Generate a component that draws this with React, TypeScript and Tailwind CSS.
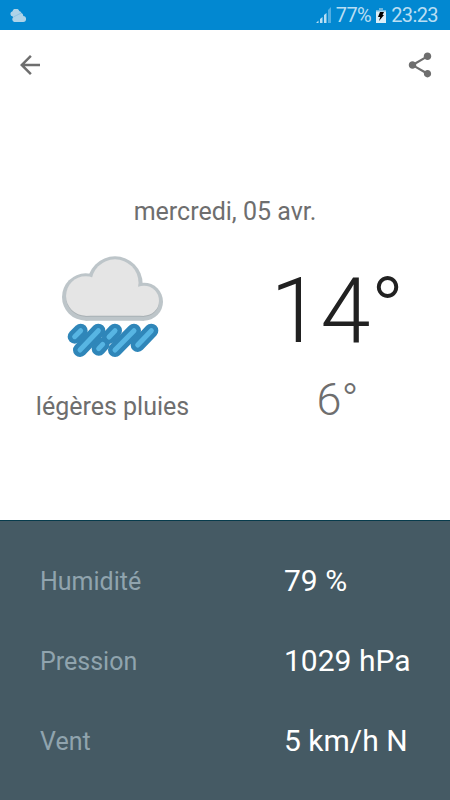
import type { ReactNode } from "react";

const details = [
  { label: "Humidité", value: "79 %" },
  { label: "Pression", value: "1029 hPa" },
  { label: "Vent", value: "5 km/h N" },
];

const drops = [
  "M74 275 92 257",
  "M90 315 145 257",
  "M146 311 158 298",
  "M177 276 195 257",
  "M195 315 252 257",
  "M263 300 304 257",
];

const CloudShape = ({ inset = 0, fill }: { inset?: number; fill: string }) => (
  <g fill={fill}>
    <circle cx="107" cy="156" r={71 - inset} />
    <circle cx="195" cy="117" r={83 - inset} />
    <circle cx="282" cy="170" r={57 - inset} />
    <path d={`M107 140H282V${227 - inset}H107Z`} />
  </g>
);

const RainIcon = () => (
  <svg viewBox="0 0 375 375" className="h-[125px] w-[125px]" fill="none">
    <CloudShape fill="#bdc5c9" />
    <CloudShape inset={12} fill="#a9b0b4" />
    <g transform="translate(0 -3)">
      <CloudShape inset={12} fill="#e5e5e5" />
    </g>
    <g stroke="#2f86b9" strokeWidth="42" strokeLinecap="round">
      {drops.map((d) => (
        <path key={d} d={d} />
      ))}
    </g>
    <g stroke="#57b5e3" strokeWidth="15" strokeLinecap="round">
      {drops.map((d) => (
        <path key={d} d={d} />
      ))}
    </g>
  </svg>
);

const StatusBar = () => (
  <div className="flex h-[30px] items-center bg-[#0288d1] pr-3 pl-2.5 text-[20px] tracking-[-0.6px] text-[#b9def3]">
    <svg viewBox="0 0 16 13" className="h-[13px] w-4" fill="#aed3e8">
      <path d="M2.700 7.500A2.700 2.700 0 0 1 2.500 2.200 3.600 3.600 0 0 1 9.300 2 2.800 2.800 0 0 1 11.500 4L4 9Z" />
      <path d="M4.300 13a2.800 2.800 0 0 1-.8-5L11.500 4A3 3 0 0 1 13.200 7 3 3 0 0 1 13 13Z" />
      <path d="M3.500 7.900 11 4" stroke="#7bbbe0" strokeWidth=".6" />
    </svg>
    <div className="ml-auto flex items-center">
      <svg viewBox="0 0 15 16" className="mr-[5px] h-4 w-[15px]" fill="#b9def3">
        <path d="M0 16l2.500-2.500V16zM4 12l2.500-2v6H4zM8 8l2.500-2v10H8z" />
        <path d="M12 3l3-3v16h-3z" opacity=".45" />
      </svg>
      <span className="leading-none">77%</span>
      <svg viewBox="0 0 10 15" className="mr-[5px] ml-[5px] h-[15px] w-2.5">
        <path d="M3 0h4v2h3v2H0V2h3z" fill="#6fb8df" />
        <path d="M0 3.500h10V15H0z" fill="#dceef8" />
        <path d="M4 4h4L6.500 7H8l-5 6 1.200-4H2z" fill="#000" />
      </svg>
      <span className="leading-none">23:23</span>
    </div>
  </div>
);

const Toolbar = () => (
  <div className="flex h-[70px] items-center justify-between px-[15px] text-[#6e6e6e]">
    <svg viewBox="0 0 24 24" className="h-[30px] w-[30px]" fill="currentColor">
      <path d="M20 11H7.830l5.590-5.590L12 4l-8 8 8 8 1.410-1.410L7.830 13H20v-2z" />
    </svg>
    <svg viewBox="0 0 24 24" className="h-[30px] w-[30px]" fill="currentColor">
      <path d="M18 16.080c-.76 0-1.440.3-1.960.77L8.910 12.700c.05-.23.090-.46.090-.7s-.04-.47-.09-.7l7.050-4.110c.54.5 1.250.81 2.040.81 1.660 0 3-1.340 3-3s-1.340-3-3-3-3 1.340-3 3c0 .24.040.47.090.7L8.040 9.810C7.500 9.310 6.790 9 6 9c-1.660 0-3 1.340-3 3s1.340 3 3 3c.79 0 1.500-.31 2.040-.81l7.120 4.160c-.05.21-.08.43-.08.65 0 1.610 1.310 2.920 2.920 2.920s2.920-1.310 2.920-2.920-1.310-2.920-2.920-2.920z" />
    </svg>
  </div>
);

const Column = ({ children }: { children: ReactNode }) => (
  <div className="flex w-[225px] flex-col items-center">{children}</div>
);

export default function App() {
  return (
    <div className="flex h-[800px] w-[450px] flex-col overflow-hidden bg-white font-['Roboto',sans-serif]">
      <StatusBar />
      <Toolbar />
      <main className="flex h-[420px] flex-col pt-[97px] text-[#6e6e6e]">
        <p className="text-center text-[25px] leading-[30px]">mercredi, 05 avr.</p>
        <div className="mt-[18px] flex">
          <Column>
            <RainIcon />
            <p className="mt-[22px] text-[25px] leading-[30px]">légères pluies</p>
          </Column>
          <Column>
            <p className="mt-[12px] text-[90px] leading-[110px] font-light text-[#212121]">14°</p>
            <p className="mt-[5px] text-[45px] leading-[56px] font-light">6°</p>
          </Column>
        </div>
      </main>
      <section className="flex-1 border-t border-[#073b4c] bg-[#455a64] pt-5">
        {details.map(({ label, value }) => (
          <div key={label} className="flex h-20 items-center pl-10">
            <span className="w-[244px] text-[25px] leading-none text-[#90a4ae]">{label}</span>
            <span className="text-[30px] leading-none text-white">{value}</span>
          </div>
        ))}
      </section>
    </div>
  );
}
